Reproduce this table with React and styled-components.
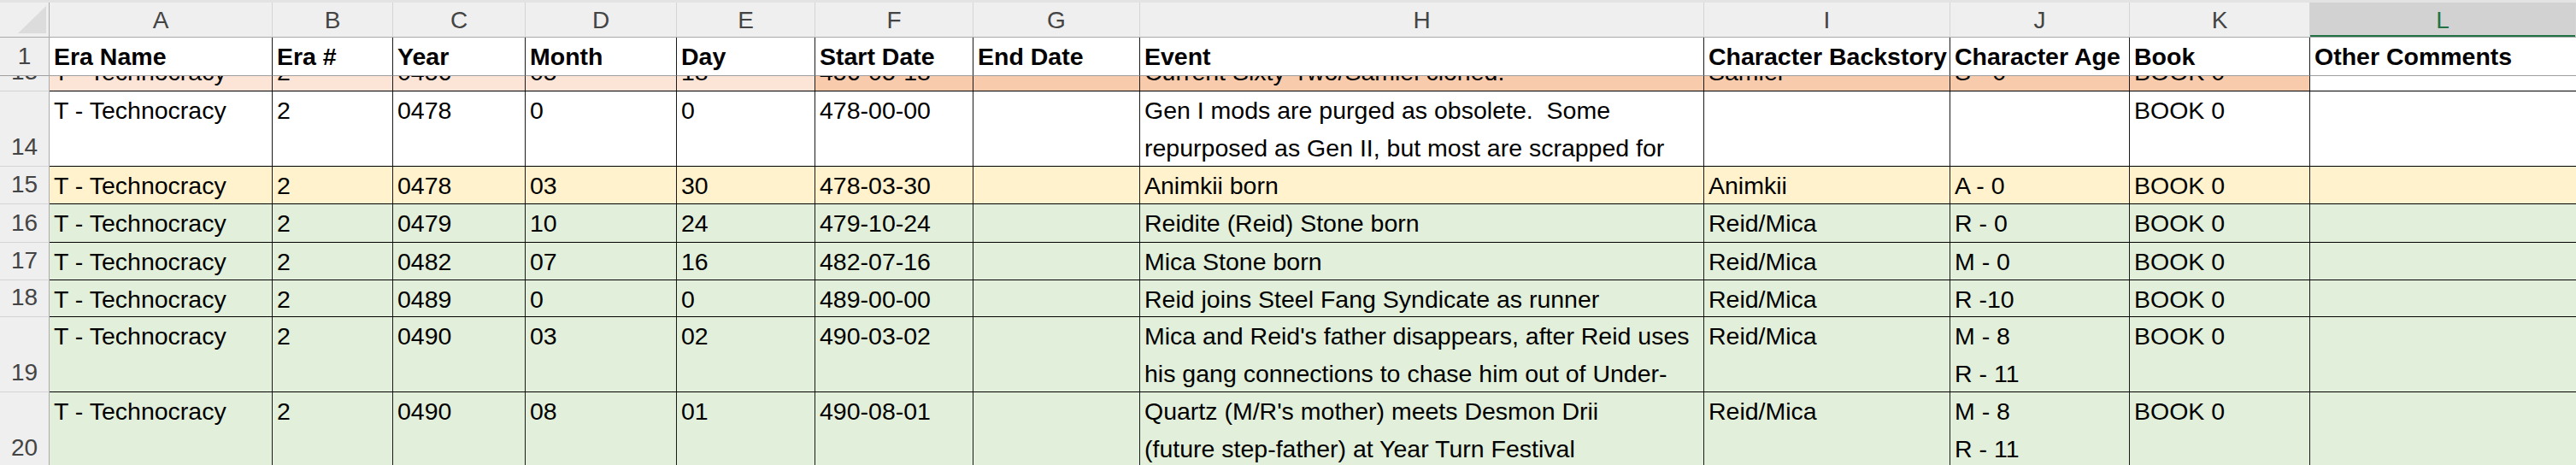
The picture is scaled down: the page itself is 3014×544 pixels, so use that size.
import React from "react";
import styled, { createGlobalStyle } from "styled-components";

const GlobalStyle = createGlobalStyle`
  html, body {
    margin: 0;
    padding: 0;
    background: #ffffff;
    overflow: hidden;
  }
  body {
    font-family: "Liberation Sans", Arial, sans-serif;
  }
  * { box-sizing: border-box; }
`;

const COLUMNS = [
  { key: "A", width: 261 },
  { key: "B", width: 141 },
  { key: "C", width: 155 },
  { key: "D", width: 177 },
  { key: "E", width: 162 },
  { key: "F", width: 185 },
  { key: "G", width: 195 },
  { key: "H", width: 660 },
  { key: "I", width: 288 },
  { key: "J", width: 210 },
  { key: "K", width: 211 },
  { key: "L", width: 311 },
];

const TEMPLATE = `58px ${COLUMNS.map((c, i) =>
  i === COLUMNS.length - 1 ? "1fr" : `${c.width}px`
).join(" ")}`;

const PEACH_LIGHT = "#fce4d6";
const PEACH = "#f8cbad";
const YELLOW = "#fff2cc";
const GREEN = "#e2efda";

const Sheet = styled.div`
  width: 100%;
  height: 544px;
  overflow: hidden;
  display: flex;
  flex-direction: column;
  background: #ffffff;
`;

const TopStrip = styled.div`
  height: 3px;
  flex-shrink: 0;
  background: #e3e3e3;
`;

const HeaderBar = styled.div`
  display: grid;
  grid-template-columns: ${TEMPLATE};
  height: 41px;
  flex-shrink: 0;
  background: #efefef;
  border-bottom: 1px solid #ababab;
`;

const Corner = styled.div`
  border-right: 1px solid #ababab;
  display: flex;
`;

const ColLetter = styled.div`
  display: flex;
  align-items: center;
  justify-content: center;
  font-size: 28px;
  color: ${(p) => (p.$active ? "#217346" : "#444444")};
  background: ${(p) => (p.$active ? "#d2d2d2" : "transparent")};
  border-right: 1px solid #d5d5d5;
  box-shadow: ${(p) => (p.$active ? "inset 0 -2px 0 #217346" : "none")};
  padding-top: 2px;
`;

const Row = styled.div`
  display: grid;
  grid-template-columns: ${TEMPLATE};
  height: ${(p) => p.$h}px;
  flex-shrink: 0;
`;

const RowNum = styled.div`
  display: flex;
  flex-direction: column;
  justify-content: flex-end;
  align-items: center;
  overflow: hidden;
  background: #efefef;
  color: #444444;
  font-size: 28px;
  border-right: 1px solid #ababab;
  border-bottom: 1px solid ${(p) => p.$line};
`;

const Cell = styled.div`
  display: flex;
  flex-direction: column;
  justify-content: ${(p) => (p.$clip ? "flex-end" : "flex-start")};
  overflow: hidden;
  padding: 0 5px;
  background: ${(p) => p.$bg || "#ffffff"};
  color: #000000;
  font-size: 28.5px;
  font-weight: ${(p) => (p.$bold ? 700 : 400)};
  border-right: ${(p) => (p.$last ? "none" : "1px solid #1a1a1a")};
  border-bottom: 1px solid ${(p) => p.$line};
`;

const Line = styled.span`
  display: block;
  flex-shrink: 0;
  height: 44px;
  line-height: 44px;
  white-space: pre;
`;

const HEADINGS = [
  "Era Name",
  "Era #",
  "Year",
  "Month",
  "Day",
  "Start Date",
  "End Date",
  "Event",
  "Character Backstory",
  "Character Age",
  "Book",
  "Other Comments",
];

const ROWS = [
  {
    n: 13,
    h: 18,
    clip: true,
    fill: (i) => (i < 5 ? PEACH_LIGHT : i < 11 ? PEACH : "#ffffff"),
    cells: [
      "T - Technocracy", "2", "0456", "05", "18", "456-05-18", "",
      "Current Sixty-Two/Samiel cloned.", "Samiel", "S - 0", "BOOK 0", "",
    ],
  },
  {
    n: 14,
    h: 88,
    fill: () => "#ffffff",
    cells: [
      "T - Technocracy", "2", "0478", "0", "0", "478-00-00", "",
      [
        "Gen I mods are purged as obsolete.  Some",
        "repurposed as Gen II, but most are scrapped for",
        "parts.",
      ],
      "", "", "BOOK 0", "",
    ],
  },
  {
    n: 15,
    h: 44,
    fill: () => YELLOW,
    cells: [
      "T - Technocracy", "2", "0478", "03", "30", "478-03-30", "",
      "Animkii born", "Animkii", "A - 0", "BOOK 0", "",
    ],
  },
  {
    n: 16,
    h: 45,
    fill: () => GREEN,
    cells: [
      "T - Technocracy", "2", "0479", "10", "24", "479-10-24", "",
      "Reidite (Reid) Stone born", "Reid/Mica", "R - 0", "BOOK 0", "",
    ],
  },
  {
    n: 17,
    h: 44,
    fill: () => GREEN,
    cells: [
      "T - Technocracy", "2", "0482", "07", "16", "482-07-16", "",
      "Mica Stone born", "Reid/Mica", "M - 0", "BOOK 0", "",
    ],
  },
  {
    n: 18,
    h: 43,
    fill: () => GREEN,
    cells: [
      "T - Technocracy", "2", "0489", "0", "0", "489-00-00", "",
      "Reid joins Steel Fang Syndicate as runner", "Reid/Mica", "R -10", "BOOK 0", "",
    ],
  },
  {
    n: 19,
    h: 88,
    fill: () => GREEN,
    cells: [
      "T - Technocracy", "2", "0490", "03", "02", "490-03-02", "",
      [
        "Mica and Reid's father disappears, after Reid uses",
        "his gang connections to chase him out of Under-",
        "city.",
      ],
      "Reid/Mica", ["M - 8", "R - 11"], "BOOK 0", "",
    ],
  },
  {
    n: 20,
    h: 88,
    fill: () => GREEN,
    cells: [
      "T - Technocracy", "2", "0490", "08", "01", "490-08-01", "",
      [
        "Quartz (M/R's mother) meets Desmon Drii",
        "(future step-father) at Year Turn Festival",
      ],
      "Reid/Mica", ["M - 8", "R - 11"], "BOOK 0", "",
    ],
  },
];

function CellText({ value }) {
  const lines = Array.isArray(value) ? value : [value];
  return lines.map((t, i) => <Line key={i}>{t || "\u00a0"}</Line>);
}

export default function App() {
  return (
    <>
      <GlobalStyle />
      <Sheet>
        <TopStrip />
        <HeaderBar>
          <Corner>
            <svg width="57" height="40" viewBox="0 0 57 40">
              <polygon points="21,36 54,36 54,4" fill="#dcdcdc" />
            </svg>
          </Corner>
          {COLUMNS.map((c) => (
            <ColLetter key={c.key} $active={c.key === "L"}>
              {c.key}
            </ColLetter>
          ))}
        </HeaderBar>

        <Row $h={45}>
          <RowNum $line="#9e9e9e">
            <Line>1</Line>
          </RowNum>
          {HEADINGS.map((t, i) => (
            <Cell
              key={t}
              $bold
              $line="#9e9e9e"
              $last={i === HEADINGS.length - 1}
            >
              <Line>{t}</Line>
            </Cell>
          ))}
        </Row>

        {ROWS.map((r) => (
          <Row key={r.n} $h={r.h}>
            <RowNum $line="#d4d4d4">
              <Line>{r.n}</Line>
            </RowNum>
            {r.cells.map((v, i) => (
              <Cell
                key={i}
                $clip={r.clip}
                $bg={r.fill(i)}
                $line="#000000"
                $last={i === r.cells.length - 1}
              >
                <CellText value={v} />
              </Cell>
            ))}
          </Row>
        ))}
      </Sheet>
    </>
  );
}
